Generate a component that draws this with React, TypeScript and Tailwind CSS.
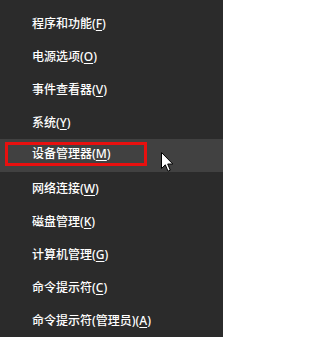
import React from "react";

type Item = { label: string; key: string };

const items: Item[] = [
  { label: "程序和功能", key: "F" },
  { label: "电源选项", key: "O" },
  { label: "事件查看器", key: "V" },
  { label: "系统", key: "Y" },
  { label: "设备管理器", key: "M" },
  { label: "网络连接", key: "W" },
  { label: "磁盘管理", key: "K" },
  { label: "计算机管理", key: "G" },
  { label: "命令提示符", key: "C" },
  { label: "命令提示符(管理员)", key: "A" },
];

function Label({ item }: { item: Item }) {
  return (
    <span className="whitespace-nowrap">
      {item.label}(<span className="underline underline-offset-2">{item.key}</span>)
    </span>
  );
}

function Cursor() {
  return (
    <svg
      className="absolute left-[161px] top-[152px]"
      width="13"
      height="21"
      viewBox="0 0 13 21"
    >
      <path
        d="M0.5 0.5 L0.5 16.5 L4.3 12.8 L7 19.2 L9.3 18.2 L6.7 12 L11.8 12 Z"
        fill="#ffffff"
        stroke="#000000"
        strokeWidth="1"
        strokeLinejoin="miter"
      />
    </svg>
  );
}

export default function App() {
  return (
    <div
      className="relative w-[223px] h-[337px] bg-[#2b2b2b] text-white text-[12px] leading-[16px] font-medium overflow-hidden pt-[7px]"
      style={{ fontFamily: '"Noto Sans", "Noto Sans CJK SC", sans-serif' }}
    >
      {items.map((item, i) =>
        i === 4 ? (
          <div key={i} className="h-[33px] bg-[#414141] pt-[3px] pl-[5px]">
            <div className="w-[142px] h-[24px] border-[3px] border-[#e8100f] flex items-center pl-[24px]">
              <Label item={item} />
            </div>
          </div>
        ) : (
          <div key={i} className="h-[33px] flex items-center pl-[32px]">
            <Label item={item} />
          </div>
        )
      )}
      <Cursor />
    </div>
  );
}
